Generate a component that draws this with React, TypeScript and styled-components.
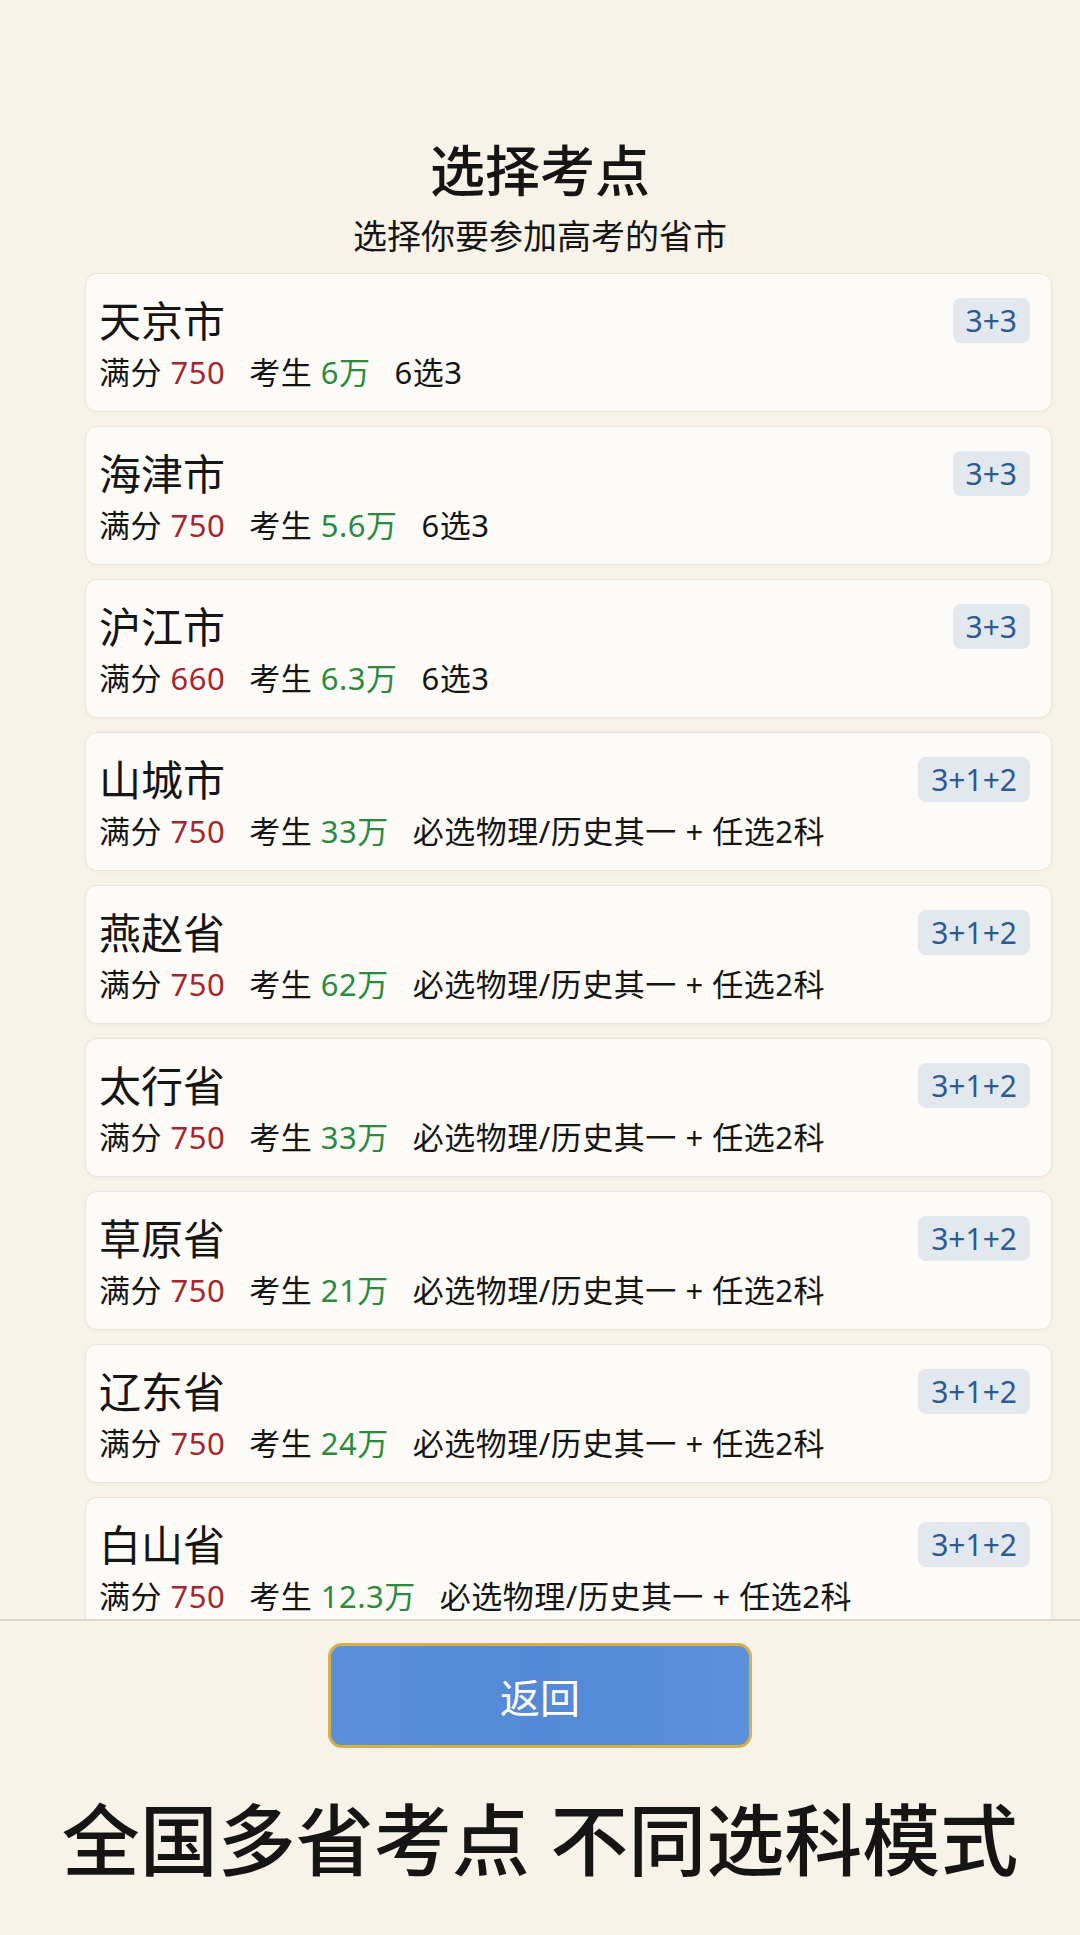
import styled, { createGlobalStyle } from "styled-components"

const provinces = [
    { name: "天京市", full: 750, students: "6万", mode: "6选3", tag: "3+3" },
    { name: "海津市", full: 750, students: "5.6万", mode: "6选3", tag: "3+3" },
    { name: "沪江市", full: 660, students: "6.3万", mode: "6选3", tag: "3+3" },
    { name: "山城市", full: 750, students: "33万", mode: "必选物理/历史其一 + 任选2科", tag: "3+1+2" },
    { name: "燕赵省", full: 750, students: "62万", mode: "必选物理/历史其一 + 任选2科", tag: "3+1+2" },
    { name: "太行省", full: 750, students: "33万", mode: "必选物理/历史其一 + 任选2科", tag: "3+1+2" },
    { name: "草原省", full: 750, students: "21万", mode: "必选物理/历史其一 + 任选2科", tag: "3+1+2" },
    { name: "辽东省", full: 750, students: "24万", mode: "必选物理/历史其一 + 任选2科", tag: "3+1+2" },
    { name: "白山省", full: 750, students: "12.3万", mode: "必选物理/历史其一 + 任选2科", tag: "3+1+2" },
]

export default function App() {
    const cards = provinces.map(item => {
        return (
            <Card key={item.name}>
                <CardTop>
                    <Name>{item.name}</Name>
                    <Tag>{item.tag}</Tag>
                </CardTop>
                <Info>
                    <span>满分 <Value $tone="red">{item.full}</Value></span>
                    <span>考生 <Value $tone="green">{item.students}</Value></span>
                    <span>{item.mode}</span>
                </Info>
            </Card>
        )
    })

    return (
        <Page>
            <GlobalStyle />
            <Header>
                <Title>选择考点</Title>
                <Subtitle>选择你要参加高考的省市</Subtitle>
            </Header>
            <List>{cards}</List>
            <Footer>
                <BackButton>返回</BackButton>
                <Slogan>全国多省考点 不同选科模式</Slogan>
            </Footer>
        </Page>
    )
}

const GlobalStyle = createGlobalStyle`
    html, body {
        margin: 0;
        padding: 0;
        background: #f8f3e9;
    }
    * {
        box-sizing: border-box;
    }
`

const Page = styled.div`
    width: 1080px;
    height: 1935px;
    display: flex;
    flex-direction: column;
    background: #f8f3e9;
    color: #151515;
    font-family: "Noto Sans", "Noto Sans CJK SC", sans-serif;
    overflow: hidden;
`

const Header = styled.header`
    display: flex;
    flex-direction: column;
    align-items: center;
    padding-top: 137px;
    padding-bottom: 16px;
`

const Title = styled.h1`
    margin: 0;
    font-size: 55px;
    line-height: 66px;
    font-weight: 500;
`

const Subtitle = styled.p`
    margin: 12px 0 0;
    font-size: 34px;
    line-height: 42px;
    font-weight: 400;
`

const List = styled.section`
    flex: 1;
    min-height: 0;
    overflow: hidden;
    display: flex;
    flex-direction: column;
    gap: 14px;
    padding: 0 28px 0 85px;
`

const Card = styled.div`
    flex-shrink: 0;
    background: #fdfbf7;
    border: 1px solid #ebe5d9;
    border-radius: 12px;
    box-shadow: rgba(120, 100, 60, 0.06) 0 1px 3px;
    padding: 22px 21px 19px 13px;
`

const CardTop = styled.div`
    display: flex;
    justify-content: space-between;
    align-items: flex-start;
`

const Name = styled.p`
    margin: 0;
    font-size: 42px;
    line-height: 50px;
    font-weight: 400;
`

const Tag = styled.span`
    margin-top: 2px;
    padding: 0 13px;
    height: 45px;
    line-height: 45px;
    border-radius: 8px;
    background: #e2e8ee;
    color: #2c5b93;
    font-size: 30px;
`

const Info = styled.div`
    display: flex;
    gap: 24px;
    margin-top: 7px;
    font-size: 31px;
    line-height: 39px;
    letter-spacing: 0.5px;
    white-space: nowrap;
`

const Value = styled.span<{ $tone: "red" | "green" }>`
    color: ${p => (p.$tone === "red" ? "#a8262b" : "#2b8a3e")};
`

const Footer = styled.footer`
    flex-shrink: 0;
    height: 316px;
    border-top: 2px solid #ddd6ca;
    display: flex;
    flex-direction: column;
    align-items: center;
    padding-top: 22px;
`

const BackButton = styled.button`
    width: 424px;
    height: 105px;
    border: 3px solid #d4af4a;
    border-radius: 14px;
    background: linear-gradient(90deg, #5b8fd9, #5389d6 50%, #5c90da);
    color: #ffffff;
    font-family: "Noto Sans CJK SC", sans-serif;
    font-size: 40px;
    cursor: pointer;
`

const Slogan = styled.p`
    margin: 44px 0 0;
    font-size: 78px;
    line-height: 96px;
    font-weight: 500;
    white-space: nowrap;
`
